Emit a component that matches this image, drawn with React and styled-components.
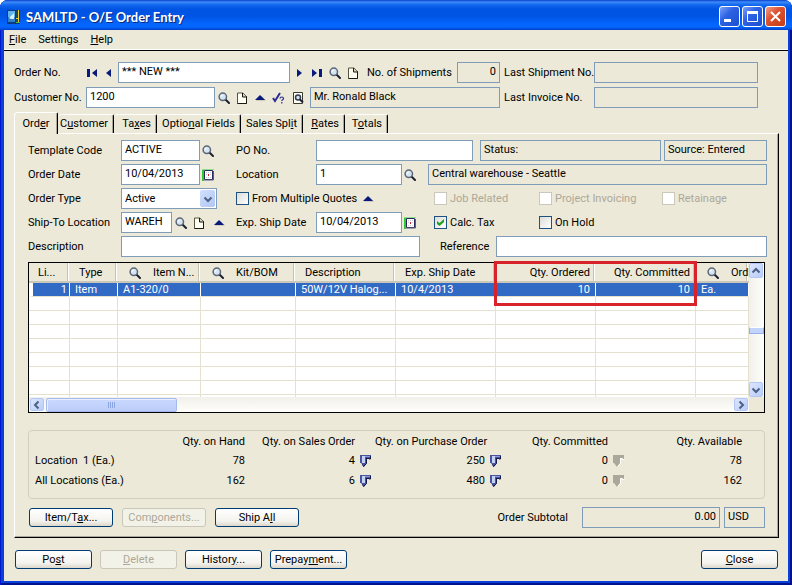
import React, { useState } from 'react';
import styled, { createGlobalStyle, css } from 'styled-components';

const GlobalStyle = createGlobalStyle`
  * {
    box-sizing: border-box;
  }
  body {
    margin: 0;
    background: #fff;
  }
  body, button, input, select, table {
    font-family: Roboto, "Liberation Sans", sans-serif;
    font-size: 11px;
    line-height: 14px;
    color: #000;
  }
`;

const Window = styled.div`
  display: flex;
  flex-direction: column;
  min-height: 100vh;
  padding: 0 4px 4px;
  border-radius: 8px 8px 0 0;
  background: #0a3fd8;
  box-shadow: inset 1px 0 #0019cf, inset -2px -2px #00138c;
  overflow: hidden;
`;

const TitleBar = styled.header`
  display: flex;
  align-items: center;
  gap: 2px;
  height: 30px;
  margin: 0 -4px;
  padding: 3px 6px 0;
  background: linear-gradient(#0a3fd0 0, #3c8cf7 2px, #1166ee 5px, #0054e3 9px, #0054e3 16px, #0466ff 24px, #0466ff 27px, #0040c8 30px);
`;

const Title = styled.h1`
  flex: 1;
  margin: 0 0 0 2px;
  font-family: Lato, "Open Sans", sans-serif;
  font-size: 13px;
  font-weight: 700;
  line-height: 18px;
  color: #fff;
  text-shadow: 1px 1px #0a2a80;
`;

const CaptionButton = styled.button`
  display: flex;
  align-items: center;
  justify-content: center;
  width: 21px;
  height: 21px;
  padding: 0;
  border: 1px solid #fff;
  border-radius: 3px;
  background: ${(p) =>
    p.$close
      ? 'linear-gradient(135deg, #f0a088, #dd5230 40%, #c43c14)'
      : 'linear-gradient(135deg, #7ba2f8, #2d62e4 40%, #1c4fd0)'};
`;

const Client = styled.div`
  display: flex;
  flex: 1;
  flex-direction: column;
  background: #ece9d8;
`;

const MenuBar = styled.nav`
  display: flex;
  gap: 12px;
  height: 21px;
  padding: 0 5px 1px;
  border-bottom: 1px solid #000;
  box-shadow: inset 0 -1px #fff;
`;

const MenuItem = styled.button`
  padding: 0;
  border: 0;
  background: none;
`;

const Body = styled.main`
  display: flex;
  flex: 1;
  flex-direction: column;
  padding: 11px 9px 12px 10px;
`;

const HeaderRows = styled.div`
  display: grid;
  gap: 4px;
  padding-right: 21px;
`;

const HeaderRow = styled.div`
  display: grid;
  grid-template-columns: 72px 414px 94px 1fr;
  align-items: center;
`;

const Label = styled.label`
  padding-left: ${(p) => p.$indent || 0}px;
  white-space: nowrap;
`;

const Line = styled.div`
  display: flex;
  flex: ${(p) => (p.$grow ? '1' : 'none')};
  align-items: center;
  min-width: 0;
  gap: ${(p) => p.$gap || 0}px;
  padding-left: ${(p) => p.$indent || 0}px;
`;

const Field = styled.input`
  width: ${(p) => (p.$width ? `${p.$width}px` : 'auto')};
  flex: ${(p) => (p.$width ? 'none' : '1')};
  min-width: 0;
  height: 21px;
  padding: 0 3px 2px;
  border: 1px solid #7f9db9;
  border-radius: 0;
  outline: 0;
  background: ${(p) => (p.readOnly ? 'transparent' : '#fff')};
  text-align: ${(p) => p.$align || 'left'};
`;

const Push = styled.div`
  flex: 1;
`;

const IconButton = styled.button`
  display: flex;
  flex: none;
  align-items: center;
  justify-content: center;
  width: ${(p) => p.$width || 16}px;
  height: 16px;
  padding: 0;
  border: 0;
  background: none;
`;

const Icons = styled.div`
  display: flex;
  gap: 2px;
  padding-left: 1px;
`;

const TabList = styled.div`
  display: flex;
  align-items: flex-end;
  height: 21px;
  margin-top: 4px;
`;

const Tab = styled.button`
  width: ${(p) => p.$width}px;
  height: 19px;
  padding: 0 5px 0 0;
  border: 0;
  border-top: 1px solid #fff;
  border-right: 1px solid #000;
  border-radius: 4px 2px 0 0;
  background: #ece9d8;
  box-shadow: inset -1px 0 #aca899;
  text-align: right;
  white-space: nowrap;
  ${(p) =>
    p.$active &&
    css`
      position: relative;
      height: 22px;
      margin-bottom: -1px;
      padding: 0;
      border-left: 1px solid #fff;
      text-align: center;
    `}
`;

const Panel = styled.section`
  padding: 6px 11px 9px 13px;
  border: 1px solid #fff;
  border-right-color: #000;
  border-bottom-color: #000;
  box-shadow: inset -1px -1px #aca899;
`;

const Form = styled.div`
  display: grid;
  gap: 3px;
`;

const FormRow = styled.div`
  display: grid;
  grid-template-columns: 93px 115px 80px 112px 1fr;
  align-items: center;
  height: 21px;
`;

const Wide = styled(Line)`
  grid-column: span ${(p) => p.$span};
`;

const SelectBox = styled.div`
  position: relative;
  width: 96px;
  height: 21px;
`;

const Select = styled.select`
  width: 100%;
  height: 21px;
  padding: 0 3px;
  border: 1px solid #7f9db9;
  border-radius: 0;
  appearance: none;
  background: #fff;
`;

const SelectArrow = styled.span`
  position: absolute;
  top: 2px;
  right: 2px;
  display: flex;
  align-items: center;
  justify-content: center;
  width: 15px;
  height: 17px;
  border-radius: 2px;
  background: linear-gradient(135deg, #d3e0fd, #b0c6f6);
  pointer-events: none;
`;

const CheckLabel = styled.label`
  display: flex;
  flex: none;
  align-items: center;
  gap: 3px;
  width: ${(p) => (p.$width ? `${p.$width}px` : 'auto')};
  color: ${(p) => (p.$disabled ? '#aca899' : '#000')};
  white-space: nowrap;
`;

const Check = styled.input`
  flex: none;
  display: grid;
  place-items: center;
  width: 13px;
  height: 13px;
  margin: 0;
  border: 1px solid #1d5281;
  appearance: none;
  background: linear-gradient(135deg, #dcdcd7, #fff);
  &:disabled {
    border-color: #cac8bb;
    background: #fff;
  }
  &:checked::after {
    content: '';
    width: 7px;
    height: 7px;
    background: #21a121;
    clip-path: polygon(0 29%, 36% 57%, 100% 0, 100% 43%, 36% 100%, 0 72%);
  }
`;

const GridBox = styled.div`
  position: relative;
  display: grid;
  grid-template-columns: minmax(0, 1fr) 15px;
  grid-template-rows: 134px 15px;
  margin: 5px 2px 17px 0;
  border: 1px solid #000;
  background: #ece9d8;
`;

const GridView = styled.div`
  overflow: hidden;
  background: #fff;
`;

const GridTable = styled.table`
  width: 100%;
  border-collapse: separate;
  border-spacing: 0;
  table-layout: fixed;
`;

const HeadCell = styled.th`
  height: 20px;
  padding: 1px 6px 0 9px;
  border-bottom: 2px solid #cbc7b8;
  background: linear-gradient(90deg, #ece9d8 calc(100% - 3px), #c5c2b2 calc(100% - 3px), #c5c2b2 calc(100% - 2px), #fff calc(100% - 2px), #fff calc(100% - 1px), #ece9d8 calc(100% - 1px));
  font-weight: 400;
  text-align: ${(p) => p.$align || 'left'};
  white-space: nowrap;
  overflow: hidden;
`;

const HeadSplit = styled.span`
  display: flex;
  align-items: center;
  gap: 12px;
  padding-left: 2px;
  svg {
    flex: none;
  }
`;

const Cell = styled.td`
  height: 14px;
  padding: 0 5px;
  border-right: 1px solid #e4e1cf;
  border-bottom: 1px solid #e4e1cf;
  line-height: 13px;
  text-align: ${(p) => p.$align || 'left'};
  white-space: nowrap;
  overflow: hidden;
  text-overflow: ellipsis;
`;

const SelectedRow = styled.tr`
  background: #316ac5;
  ${Cell} {
    padding-right: 5px;
    color: #fff;
    border-right-color: #fff;
  }
  ${Cell}:first-child {
    border-left: 4px solid #fff;
    padding-right: 2px;
  }
`;

const VScroll = styled.div`
  display: flex;
  flex-direction: column;
  justify-content: space-between;
  background: linear-gradient(90deg, #f1f0ea, #fefefb);
`;

const HScroll = styled.div`
  display: flex;
  align-items: center;
  gap: 2px;
  padding: 0 1px;
  background: linear-gradient(#f1f0ea, #fefefb);
`;

const ScrollButton = styled.button`
  display: flex;
  flex: none;
  align-items: center;
  justify-content: center;
  width: 14px;
  height: ${(p) => p.$height || 13}px;
  padding: 0;
  border: 1px solid #b4c8f6;
  border-radius: 2px;
  background: linear-gradient(135deg, #dce6fe, #bacdf9);
`;

const HThumb = styled.div`
  display: flex;
  align-items: center;
  justify-content: center;
  width: 131px;
  height: 14px;
  border: 1px solid #a4b9ec;
  border-radius: 2px;
  background: linear-gradient(#cad8fd, #bccdfa);
  box-shadow: inset 1px 1px #e8effe;
`;

const VThumb = styled.div`
  height: 7px;
  border: 1px solid #98b0e8;
  border-top-color: #fff;
  background: #c2d3fc;
`;

const Highlight = styled.div`
  position: absolute;
  top: -2px;
  left: 465px;
  width: 203px;
  height: 45px;
  border: 3px solid #d8232a;
  pointer-events: none;
`;

const Group = styled.div`
  margin: 0 2px 8px 0;
  padding: 2px 0 7px;
  border: 1px solid #d0d0bf;
  border-radius: 4px;
`;

const QtyTable = styled.table`
  width: 100%;
  border-collapse: collapse;
  table-layout: fixed;
`;

const QtyHead = styled.th`
  height: 18px;
  padding: 0;
  font-weight: 400;
  text-align: right;
  white-space: nowrap;
`;

const QtyLabel = styled.th`
  height: 20px;
  padding: 0 0 0 6px;
  font-weight: 400;
  text-align: left;
  white-space: pre;
`;

const QtyCell = styled.td`
  padding: 0;
  text-align: right;
  button {
    margin-left: 3px;
  }
`;

const PanelFoot = styled.div`
  display: flex;
  align-items: center;
  gap: 9px;
  height: 21px;
  margin: 0 2px 0 1px;
`;

const PushButton = styled.button`
  width: ${(p) => p.$width || 77}px;
  height: 19px;
  padding: 0;
  border: 1px solid #003c74;
  border-radius: 3px;
  background: linear-gradient(#fff, #f4f3ee 70%, #dcd7cb);
  white-space: nowrap;
  &:disabled {
    border-color: #c9c7ba;
    background: #f3f2e8;
    color: #aca899;
  }
`;

const Footer = styled.footer`
  display: flex;
  gap: 8px;
  padding: 12px 1px 0;
`;

const NAVY = '#0a1a7c';

const AppIcon = () => (
  <svg width="16" height="16" viewBox="0 0 16 16">
    <path d="M1 1h13v14H1z" fill="#0c3a80" />
    <path d="M2 2h8v11H2z" fill="#5fb4ee" />
    <path d="M2 8h8v5H2z" fill="#2f7fcd" />
    <path d="M3 9l5-5v6H5z" fill="#d8f0ff" />
    <path d="M9.500 2v12" stroke="#173a63" />
    <path d="M10 2h3v11h-3z" fill="#1a4a5c" />
    <path d="M12 1h1v12h-1z" fill="#f0cc28" />
    <path d="M10 9h2v1h-2z" fill="#f0cc28" />
    <path d="M10 13h4v1h-4z" fill="#4fb45c" />
  </svg>
);

const Magnifier = () => (
  <svg width="12" height="12" viewBox="0 0 12 12">
    <path d="M7.500 7.500L11 11" stroke="#1c2030" strokeWidth="2" strokeLinecap="round" />
    <circle cx="4.800" cy="4.800" r="3.700" fill="#d5e6f2" stroke="#5c6678" strokeWidth="1.500" />
    <path d="M3 5a2 2 0 0 1 2-2" stroke="#fff" fill="none" />
  </svg>
);

const PageIcon = () => (
  <svg width="10" height="12" viewBox="0 0 10 12">
    <path d="M.5 1h5.500l3.500 3.500v7h-9z" fill="#fffff4" stroke="#55543f" />
    <path d="M9.500 4v7.500H.5" fill="none" stroke="#1a1a14" />
    <path d="M5.500 1v4h4" fill="#d8d6c0" stroke="#1a1a14" />
  </svg>
);

const UpTriangle = () => (
  <svg width="11" height="7" viewBox="0 0 11 7">
    <path d="M1 6.500h10L6.500 2z" fill="#b0aea0" />
    <path d="M0 6L5 1l5 5z" fill={NAVY} />
  </svg>
);

const FirstIcon = () => (
  <svg width="12" height="10" viewBox="0 0 12 10">
    <path d="M0 1h3v8H0zM10 1v8L5 5z" fill={NAVY} />
  </svg>
);

const PrevIcon = () => (
  <svg width="8" height="10" viewBox="0 0 8 10">
    <path d="M6 1v8L1 5z" fill={NAVY} />
  </svg>
);

const NextIcon = () => (
  <svg width="8" height="10" viewBox="0 0 8 10">
    <path d="M2 1v8l5-4z" fill={NAVY} />
  </svg>
);

const LastIcon = () => (
  <svg width="12" height="10" viewBox="0 0 12 10">
    <path d="M1 1v8l5-4zM8 1h3v8H8z" fill={NAVY} />
  </svg>
);

const CreditCheckIcon = () => (
  <svg width="13" height="12" viewBox="0 0 13 12">
    <path d="M1 6l2 3 5-8" fill="none" stroke="#2a2a90" strokeWidth="2" />
    <path d="M8 6.500c0-2 3.500-2 3.500 0 0 1.500-1.700 1.200-1.700 2.500M9.800 10v1.500" fill="none" stroke="#2a2a90" strokeWidth="1.200" />
  </svg>
);

const PreviewIcon = () => (
  <svg width="11" height="12" viewBox="0 0 11 12">
    <path d="M.5 .5h9v11h-9z" fill="#fffff4" stroke="#3a3a30" />
    <circle cx="5" cy="5.500" r="2.500" fill="#d5e6f2" stroke="#333c50" strokeWidth="1.500" />
    <path d="M7 7.500l3 3" stroke="#1c2030" strokeWidth="2" />
  </svg>
);

const CalendarIcon = () => (
  <svg width="12" height="12" viewBox="0 0 12 12">
    <path d="M0 0h12v1H1v11H0z" fill="#8fe08f" />
    <path d="M0 1h2v11H0z" fill="#35c835" />
    <path d="M2.500 1.500h8v9h-8z" fill="#fff" stroke="#28285c" />
    <path d="M2 11h9.500V2" fill="none" stroke="#5a5a86" />
    <path d="M4 3h1v1H4zM6 3h1v1H6zM8 3h1v1H8zM4 5h1v1H4zM8 5h1v1H8zM4 8h1v1H4zM6 8h1v1H6zM8 8h1v1H8z" fill="#c9cbe0" />
    <path d="M6 5h1v2H6z" fill="#d02040" />
  </svg>
);

const DrillIcon = ({ off }) => (
  <svg width="12" height="13" viewBox="0 0 12 13">
    <path d="M0 0h11v4H9V3H7v5l-3 4-3-4H0z" fill={off ? '#aca899' : '#4a549c'} />
    {!off && <path d="M2 1h3v7H2z" fill="#c3d2f6" />}
    {!off && <path d="M5 1h5v1H5z" fill="#8c9cd8" />}
    {!off && <path d="M6.500 3v5.500l-3 3-1-2M6 3.500h3V4h1.500V1" fill="none" stroke="#14184c" />}
    {off && <path d="M11.500 4.500H9.500V3.500h-2v5l-3 3" fill="none" stroke="#fff" />}
  </svg>
);

const angles = { up: 0, right: 90, down: 180, left: 270 };

const Chevron = ({ to }) => (
  <svg width="10" height="10" viewBox="0 0 10 10">
    <path d="M1.500 6.500L5 3l3.500 3.500" fill="none" stroke="#4d6185" strokeWidth="2" transform={`rotate(${angles[to]} 5 5)`} />
  </svg>
);

const MinimizeIcon = () => (
  <svg width="13" height="13" viewBox="0 0 13 13">
    <path d="M1 9h7v3H1z" fill="#fff" />
  </svg>
);

const MaximizeIcon = () => (
  <svg width="13" height="13" viewBox="0 0 13 13">
    <path d="M1.500 2.500h10v9h-10z" fill="none" stroke="#fff" />
    <path d="M1 2.500h11" stroke="#fff" strokeWidth="3" />
  </svg>
);

const CloseIcon = () => (
  <svg width="13" height="13" viewBox="0 0 13 13">
    <path d="M2 2l9 9M11 2l-9 9" stroke="#fff" strokeWidth="2" />
  </svg>
);

const SearchButton = ({ label }) => (
  <IconButton aria-label={label}>
    <Magnifier />
  </IconButton>
);

const CheckField = ({ children, width, disabled, defaultChecked }) => (
  <CheckLabel $width={width} $disabled={disabled}>
    <Check type="checkbox" disabled={disabled} defaultChecked={defaultChecked} />
    {children}
  </CheckLabel>
);

const tabs = [
  { id: 'order', width: 44, text: <>Ord<u>e</u>r</> },
  { id: 'customer', width: 56, text: <>C<u>u</u>stomer</> },
  { id: 'taxes', width: 43, text: <>Ta<u>x</u>es</> },
  { id: 'optional', width: 84, text: <>Optio<u>n</u>al Fields</> },
  { id: 'split', width: 62, text: <>Sales Spl<u>i</u>t</> },
  { id: 'rates', width: 42, text: <><u>R</u>ates</> },
  { id: 'totals', width: 43, text: <>T<u>o</u>tals</> },
];

const columnWidths = [41, 48, 83, 95, 100, 100, 100, 100];
const emptyRows = [1, 2, 3, 4, 5, 6, 7, 8];

const quantities = [
  { label: 'Location  1 (Ea.)', hand: 78, sales: 4, purchase: 250, committed: 0, available: 78 },
  { label: 'All Locations (Ea.)', hand: 162, sales: 6, purchase: 480, committed: 0, available: 162 },
];

const OrderHeader = () => (
  <HeaderRows>
    <HeaderRow>
      <Label htmlFor="orderNo">Order No.</Label>
      <Line>
        <IconButton $width={14} aria-label="First order"><FirstIcon /></IconButton>
        <IconButton $width={18} aria-label="Previous order"><PrevIcon /></IconButton>
        <Field id="orderNo" $width={172} defaultValue="*** NEW ***" />
        <Icons>
          <IconButton aria-label="Next order"><NextIcon /></IconButton>
          <IconButton aria-label="Last order"><LastIcon /></IconButton>
          <SearchButton label="Find order" />
          <IconButton aria-label="New order"><PageIcon /></IconButton>
        </Icons>
        <Label htmlFor="shipments" $indent={6}>No. of Shipments</Label>
        <Push />
        <Field id="shipments" $width={43} $align="right" readOnly value="0" />
      </Line>
      <Label htmlFor="lastShipment" $indent={4}>Last Shipment No.</Label>
      <Line><Field id="lastShipment" readOnly value="" /></Line>
    </HeaderRow>
    <HeaderRow>
      <Label htmlFor="customerNo">Customer No.</Label>
      <Line>
        <Field id="customerNo" $width={129} defaultValue="1200" />
        <Icons>
          <SearchButton label="Find customer" />
          <IconButton aria-label="New customer"><PageIcon /></IconButton>
          <IconButton aria-label="Customer details"><UpTriangle /></IconButton>
          <IconButton aria-label="Credit check"><CreditCheckIcon /></IconButton>
          <IconButton $width={20} aria-label="Customer inquiry"><PreviewIcon /></IconButton>
        </Icons>
        <Push />
        <Field $width={190} aria-label="Customer name" readOnly value="Mr. Ronald Black" />
      </Line>
      <Label htmlFor="lastInvoice" $indent={4}>Last Invoice No.</Label>
      <Line><Field id="lastInvoice" readOnly value="" /></Line>
    </HeaderRow>
  </HeaderRows>
);

const OrderForm = () => (
  <Form>
    <FormRow>
      <Label htmlFor="template">Template Code</Label>
      <Line>
        <Field id="template" $width={79} defaultValue="ACTIVE" />
        <SearchButton label="Find template" />
      </Line>
      <Label htmlFor="po">PO No.</Label>
      <Wide $span={2} $gap={3}>
        <Field id="po" $width={157} defaultValue="" />
        <Line $grow $indent={4}>
          <Field aria-label="Status" readOnly value="Status:" />
        </Line>
        <Field $width={103} aria-label="Source" readOnly value="Source: Entered" />
      </Wide>
    </FormRow>
    <FormRow>
      <Label htmlFor="orderDate">Order Date</Label>
      <Line>
        <Field id="orderDate" $width={79} defaultValue="10/04/2013" />
        <IconButton aria-label="Pick order date"><CalendarIcon /></IconButton>
      </Line>
      <Label htmlFor="location">Location</Label>
      <Line>
        <Field id="location" $width={86} defaultValue="1" />
        <SearchButton label="Find location" />
      </Line>
      <Line><Field aria-label="Location name" readOnly value="Central warehouse - Seattle" /></Line>
    </FormRow>
    <FormRow>
      <Label htmlFor="orderType">Order Type</Label>
      <SelectBox>
        <Select id="orderType" defaultValue="Active">
          <option>Active</option>
        </Select>
        <SelectArrow><Chevron to="down" /></SelectArrow>
      </SelectBox>
      <Wide $span={2}>
        <CheckField width={124}>From Multiple Quotes</CheckField>
        <IconButton aria-label="Quotes"><UpTriangle /></IconButton>
      </Wide>
      <Line $indent={6}>
        <CheckField width={105} disabled>Job Related</CheckField>
        <CheckField width={123} disabled>Project Invoicing</CheckField>
        <CheckField disabled>Retainage</CheckField>
      </Line>
    </FormRow>
    <FormRow>
      <Label htmlFor="shipTo">Ship-To Location</Label>
      <Line>
        <Field id="shipTo" $width={51} defaultValue="WAREH" />
        <Icons>
          <SearchButton label="Find ship-to location" />
          <IconButton aria-label="New ship-to location"><PageIcon /></IconButton>
          <IconButton $width={20} aria-label="Ship-to details"><UpTriangle /></IconButton>
        </Icons>
      </Line>
      <Label htmlFor="shipDate">Exp. Ship Date</Label>
      <Line>
        <Field id="shipDate" $width={86} defaultValue="10/04/2013" />
        <IconButton aria-label="Pick ship date"><CalendarIcon /></IconButton>
      </Line>
      <Line $indent={6}>
        <CheckField width={105} defaultChecked>Calc. Tax</CheckField>
        <CheckField>On Hold</CheckField>
      </Line>
    </FormRow>
    <FormRow>
      <Label htmlFor="description">Description</Label>
      <Wide $span={4} $gap={7}>
        <Field id="description" $width={299} defaultValue="" />
        <Label htmlFor="reference" $indent={13}>Reference</Label>
        <Line $grow>
          <Field id="reference" defaultValue="" />
        </Line>
      </Wide>
    </FormRow>
  </Form>
);

const DetailGrid = () => (
  <GridBox>
    <GridView>
      <GridTable>
        <colgroup>
          {columnWidths.map((width, i) => (
            <col key={i} width={width} />
          ))}
          <col />
        </colgroup>
        <thead>
          <tr>
            <HeadCell>Li...</HeadCell>
            <HeadCell>Type</HeadCell>
            <HeadCell><HeadSplit><Magnifier />Item N...</HeadSplit></HeadCell>
            <HeadCell><HeadSplit><Magnifier />Kit/BOM</HeadSplit></HeadCell>
            <HeadCell>Description</HeadCell>
            <HeadCell>Exp. Ship Date</HeadCell>
            <HeadCell $align="right">Qty. Ordered</HeadCell>
            <HeadCell $align="right">Qty. Committed</HeadCell>
            <HeadCell><HeadSplit><Magnifier />Ord</HeadSplit></HeadCell>
          </tr>
        </thead>
        <tbody>
          <SelectedRow>
            <Cell $align="right">1</Cell>
            <Cell>Item</Cell>
            <Cell>A1-320/0</Cell>
            <Cell />
            <Cell>50W/12V Halog...</Cell>
            <Cell>10/4/2013</Cell>
            <Cell $align="right">10</Cell>
            <Cell $align="right">10</Cell>
            <Cell>Ea.</Cell>
          </SelectedRow>
          {emptyRows.map((row) => (
            <tr key={row}>
              {columnWidths.map((_, i) => (
                <Cell key={i} />
              ))}
              <Cell />
            </tr>
          ))}
        </tbody>
      </GridTable>
    </GridView>
    <VScroll>
      <ScrollButton $height={15} aria-label="Scroll up"><Chevron to="up" /></ScrollButton>
      <VThumb />
      <ScrollButton $height={15} aria-label="Scroll down"><Chevron to="down" /></ScrollButton>
    </VScroll>
    <HScroll>
      <ScrollButton aria-label="Scroll left"><Chevron to="left" /></ScrollButton>
      <HThumb>
        <svg width="8" height="6" viewBox="0 0 8 6">
          <path d="M.5 0v6M2.500 0v6M4.500 0v6M6.500 0v6" stroke="#8ca6e4" />
        </svg>
      </HThumb>
      <Push />
      <ScrollButton aria-label="Scroll right"><Chevron to="right" /></ScrollButton>
    </HScroll>
    <Highlight />
  </GridBox>
);

const QuantityGroup = () => (
  <Group>
    <QtyTable>
      <colgroup>
        <col />
        <col width="74" />
        <col width="110" />
        <col width="20" />
        <col width="110" />
        <col width="20" />
        <col width="103" />
        <col width="20" />
        <col width="114" />
        <col width="22" />
      </colgroup>
      <thead>
        <tr>
          <td />
          <QtyHead>Qty. on Hand</QtyHead>
          <QtyHead>Qty. on Sales Order</QtyHead>
          <td />
          <QtyHead>Qty. on Purchase Order</QtyHead>
          <td />
          <QtyHead>Qty. Committed</QtyHead>
          <td />
          <QtyHead>Qty. Available</QtyHead>
          <td />
        </tr>
      </thead>
      <tbody>
        {quantities.map((q) => (
          <tr key={q.label}>
            <QtyLabel>{q.label}</QtyLabel>
            <QtyCell>{q.hand}</QtyCell>
            <QtyCell>{q.sales}</QtyCell>
            <QtyCell><IconButton aria-label="Sales order details"><DrillIcon /></IconButton></QtyCell>
            <QtyCell>{q.purchase}</QtyCell>
            <QtyCell><IconButton aria-label="Purchase order details"><DrillIcon /></IconButton></QtyCell>
            <QtyCell>{q.committed}</QtyCell>
            <QtyCell><IconButton aria-label="Committed details" disabled><DrillIcon off /></IconButton></QtyCell>
            <QtyCell>{q.available}</QtyCell>
            <td />
          </tr>
        ))}
      </tbody>
    </QtyTable>
  </Group>
);

const App = () => {
  const [active, setActive] = useState('order');

  return (
    <>
      <GlobalStyle />
      <Window>
        <TitleBar>
          <AppIcon />
          <Title>SAMLTD - O/E Order Entry</Title>
          <CaptionButton aria-label="Minimize"><MinimizeIcon /></CaptionButton>
          <CaptionButton aria-label="Maximize"><MaximizeIcon /></CaptionButton>
          <CaptionButton $close aria-label="Close window"><CloseIcon /></CaptionButton>
        </TitleBar>
        <Client>
          <MenuBar>
            <MenuItem><u>F</u>ile</MenuItem>
            <MenuItem>Settin<u>g</u>s</MenuItem>
            <MenuItem><u>H</u>elp</MenuItem>
          </MenuBar>
          <Body>
            <OrderHeader />
            <TabList role="tablist">
              {tabs.map((tab) => (
                <Tab
                  key={tab.id}
                  role="tab"
                  aria-selected={tab.id === active}
                  $width={tab.width}
                  $active={tab.id === active}
                  onClick={() => setActive(tab.id)}
                >
                  {tab.text}
                </Tab>
              ))}
            </TabList>
            <Panel>
              <OrderForm />
              <DetailGrid />
              <QuantityGroup />
              <PanelFoot>
                <PushButton $width={84}>Item/T<u>a</u>x...</PushButton>
                <PushButton $width={84} disabled>Com<u>p</u>onents...</PushButton>
                <PushButton $width={84}>Ship A<u>l</u>l</PushButton>
                <Push />
                <Label htmlFor="subtotal">Order Subtotal</Label>
                <Line $gap={4} $indent={5}>
                  <Field id="subtotal" $width={138} $align="right" readOnly value="0.00" />
                  <Field $width={41} aria-label="Currency" readOnly value="USD" />
                </Line>
              </PanelFoot>
            </Panel>
            <Footer>
              <PushButton>Po<u>s</u>t</PushButton>
              <PushButton disabled><u>D</u>elete</PushButton>
              <PushButton>Histor<u>y</u>...</PushButton>
              <PushButton>Prepay<u>m</u>ent...</PushButton>
              <Push />
              <PushButton><u>C</u>lose</PushButton>
            </Footer>
          </Body>
        </Client>
      </Window>
    </>
  );
};

export default App;
